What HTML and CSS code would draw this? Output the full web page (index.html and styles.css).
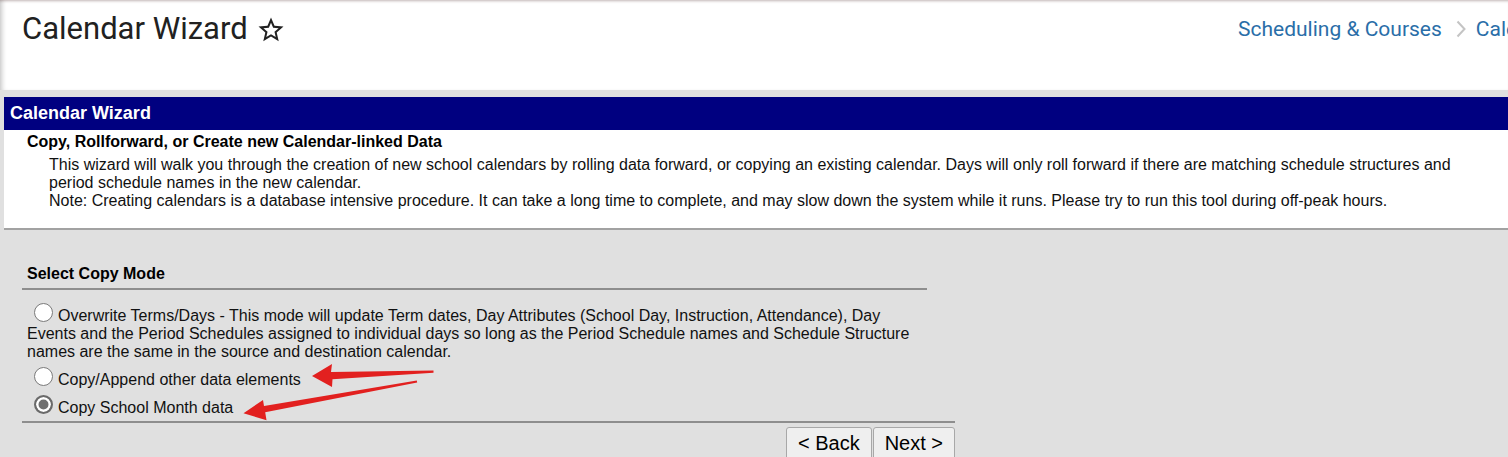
FILE: index.html
```html
<!DOCTYPE html>
<html lang="en">
<head>
<meta charset="utf-8">
<title>Calendar Wizard</title>
<link rel="stylesheet" href="styles.css">
</head>
<body>
<div class="page">
  <header class="topbar">
    <div class="title-wrap">
      <h1 class="title">Calendar Wizard</h1>
      <svg class="star" viewBox="0 0 24 24" width="30" height="30" aria-hidden="true">
        <path d="M22 9.24l-7.19-.62L12 2 9.19 8.63 2 9.24l5.46 4.73L5.82 21 12 17.27 18.18 21l-1.63-7.03L22 9.24zM12 15.4l-3.76 2.27 1-4.28-3.32-2.88 4.38-.38L12 6.1l1.71 4.04 4.38.38-3.32 2.88 1 4.28L12 15.4z"/>
      </svg>
    </div>
    <nav class="crumbs">
      <span class="crumb">Scheduling &amp; Courses</span>
      <svg class="chev" viewBox="0 0 10 18" width="10" height="18" aria-hidden="true"><polyline points="1.5,1.5 8.5,9 1.5,16.5"/></svg>
      <span class="crumb">Calendar Wizard</span>
    </nav>
  </header>

  <main class="main">
    <div class="bar">Calendar Wizard</div>
    <section class="intro">
      <div class="intro-title">Copy, Rollforward, or Create new Calendar-linked Data</div>
      <div class="intro-text">This wizard will walk you through the creation of new school calendars by rolling data forward, or copying an existing calendar. Days will only roll forward if there are matching schedule structures and period schedule names in the new calendar.<br>Note: Creating calendars is a database intensive procedure. It can take a long time to complete, and may slow down the system while it runs. Please try to run this tool during off-peak hours.</div>
    </section>

    <section class="mode">
      <div class="mode-head">Select Copy Mode</div>
      <div class="options">
        <div class="opt"><input class="radio" type="radio" name="mode">Overwrite Terms/Days - This mode will update Term dates, Day Attributes (School Day, Instruction, Attendance), Day Events and the Period Schedules assigned to individual days so long as the Period Schedule names and Schedule Structure names are the same in the source and destination calendar.</div>
        <div class="opt"><input class="radio" type="radio" name="mode">Copy/Append other data elements</div>
        <div class="opt"><input class="radio" type="radio" name="mode" checked>Copy School Month data</div>
      </div>
      <div class="actions">
        <button class="btn" type="button">&lt; Back</button>
        <button class="btn" type="button">Next &gt;</button>
      </div>
    </section>
  </main>

  <svg class="arrows" viewBox="0 0 1508 457" width="1508" height="457" aria-hidden="true">
    <polygon points="312,376 332,364 331,372 433.5,370.6 433.5,372.8 332.5,379.2 332,387"/>
    <polygon points="243.5,413.2 263,400 264,406 416.8,380.4 417.2,382.6 265.2,412.3 266.5,420.3"/>
  </svg>
</div>
</body>
</html>
```

FILE: styles.css
```css
* { box-sizing: border-box; }

html, body {
  margin: 0;
  padding: 0;
}

body {
  background: #e0e0e0;
  font-family: "Liberation Sans", Arial, sans-serif;
  color: #111;
  width: 1508px;
  height: 457px;
  overflow: hidden;
}

.page {
  position: relative;
  width: 1508px;
  height: 457px;
  overflow: hidden;
}

/* top header */
.topbar {
  height: 90px;
  background: #fff;
  display: grid;
  grid-template-columns: 1fr 270px;
  overflow: hidden;
  box-shadow: inset 0 3px 3px -2px rgba(110, 80, 80, 0.4),
              inset 5px 0 5px -3px rgba(0, 0, 0, 0.22);
}

.title-wrap {
  display: flex;
  align-items: flex-start;
  padding: 11px 0 0 22px;
}

.title {
  margin: 0;
  font-family: Roboto, "Liberation Sans", sans-serif;
  font-weight: 400;
  font-size: 31px;
  line-height: 36px;
  color: #212121;
}

.star {
  margin: 3.5px 0 0 8.5px;
  fill: #212121;
}

.crumbs {
  display: flex;
  align-items: center;
  height: 24px;
  margin-top: 17px;
  white-space: nowrap;
  font-family: Roboto, "Liberation Sans", sans-serif;
  font-size: 21px;
  line-height: 24px;
  color: #2a6ea8;
}

.chev {
  flex: none;
  margin: 0 10px 0 14px;
  fill: none;
  stroke: #c4c4c4;
  stroke-width: 2;
}

/* main wizard */
.main {
  margin: 7px 0 0 4px;
}

.bar {
  height: 33px;
  background: #000080;
  color: #fff;
  font-weight: bold;
  font-size: 18px;
  line-height: 33px;
  padding-left: 6px;
}

.intro {
  background: #fff;
  padding: 3px 38px 18px 23px;
  border-bottom: 2px solid #a2a2a2;
  font-size: 16px;
  line-height: 18px;
}

.intro-title {
  font-weight: bold;
  color: #000;
}

.intro-text {
  margin: 5px 0 0 22px;
  color: #111;
}

.mode {
  margin: 35px 0 0 18px;
  font-size: 16px;
  line-height: 18px;
}

.mode-head {
  width: 905px;
  padding: 0 0 5px 5px;
  border-bottom: 2px solid #8e8e8e;
  font-weight: bold;
  color: #000;
}

.options {
  width: 905px;
  padding: 13px 9px 0 5px;
}

.opt + .opt {
  margin-top: 6px;
}

.radio {
  appearance: none;
  -webkit-appearance: none;
  width: 19px;
  height: 19px;
  margin: 0 5px -1px 7px;
  border: 1px solid #7a7a7a;
  border-radius: 50%;
  background: #fff;
  vertical-align: baseline;
}

.radio:checked {
  border: 2px solid #6a6a6a;
  background: #6f6f6f;
  box-shadow: inset 0 0 0 2.5px #fff;
}

.actions {
  width: 933px;
  margin-top: 4px;
  padding-top: 4px;
  border-top: 2px solid #8e8e8e;
  display: flex;
  justify-content: flex-end;
  gap: 1px;
}

.btn {
  font-family: "Liberation Sans", Arial, sans-serif;
  font-size: 20px;
  line-height: 26px;
  padding: 2px 11px 6px;
  border: 1px solid #a8a8a8;
  border-radius: 3px;
  background: #efefef;
  color: #000;
}

/* annotation arrows drawn over the screenshot */
.arrows {
  position: absolute;
  left: 0;
  top: 0;
  pointer-events: none;
}

.arrows polygon {
  fill: #e2201f;
}
```
